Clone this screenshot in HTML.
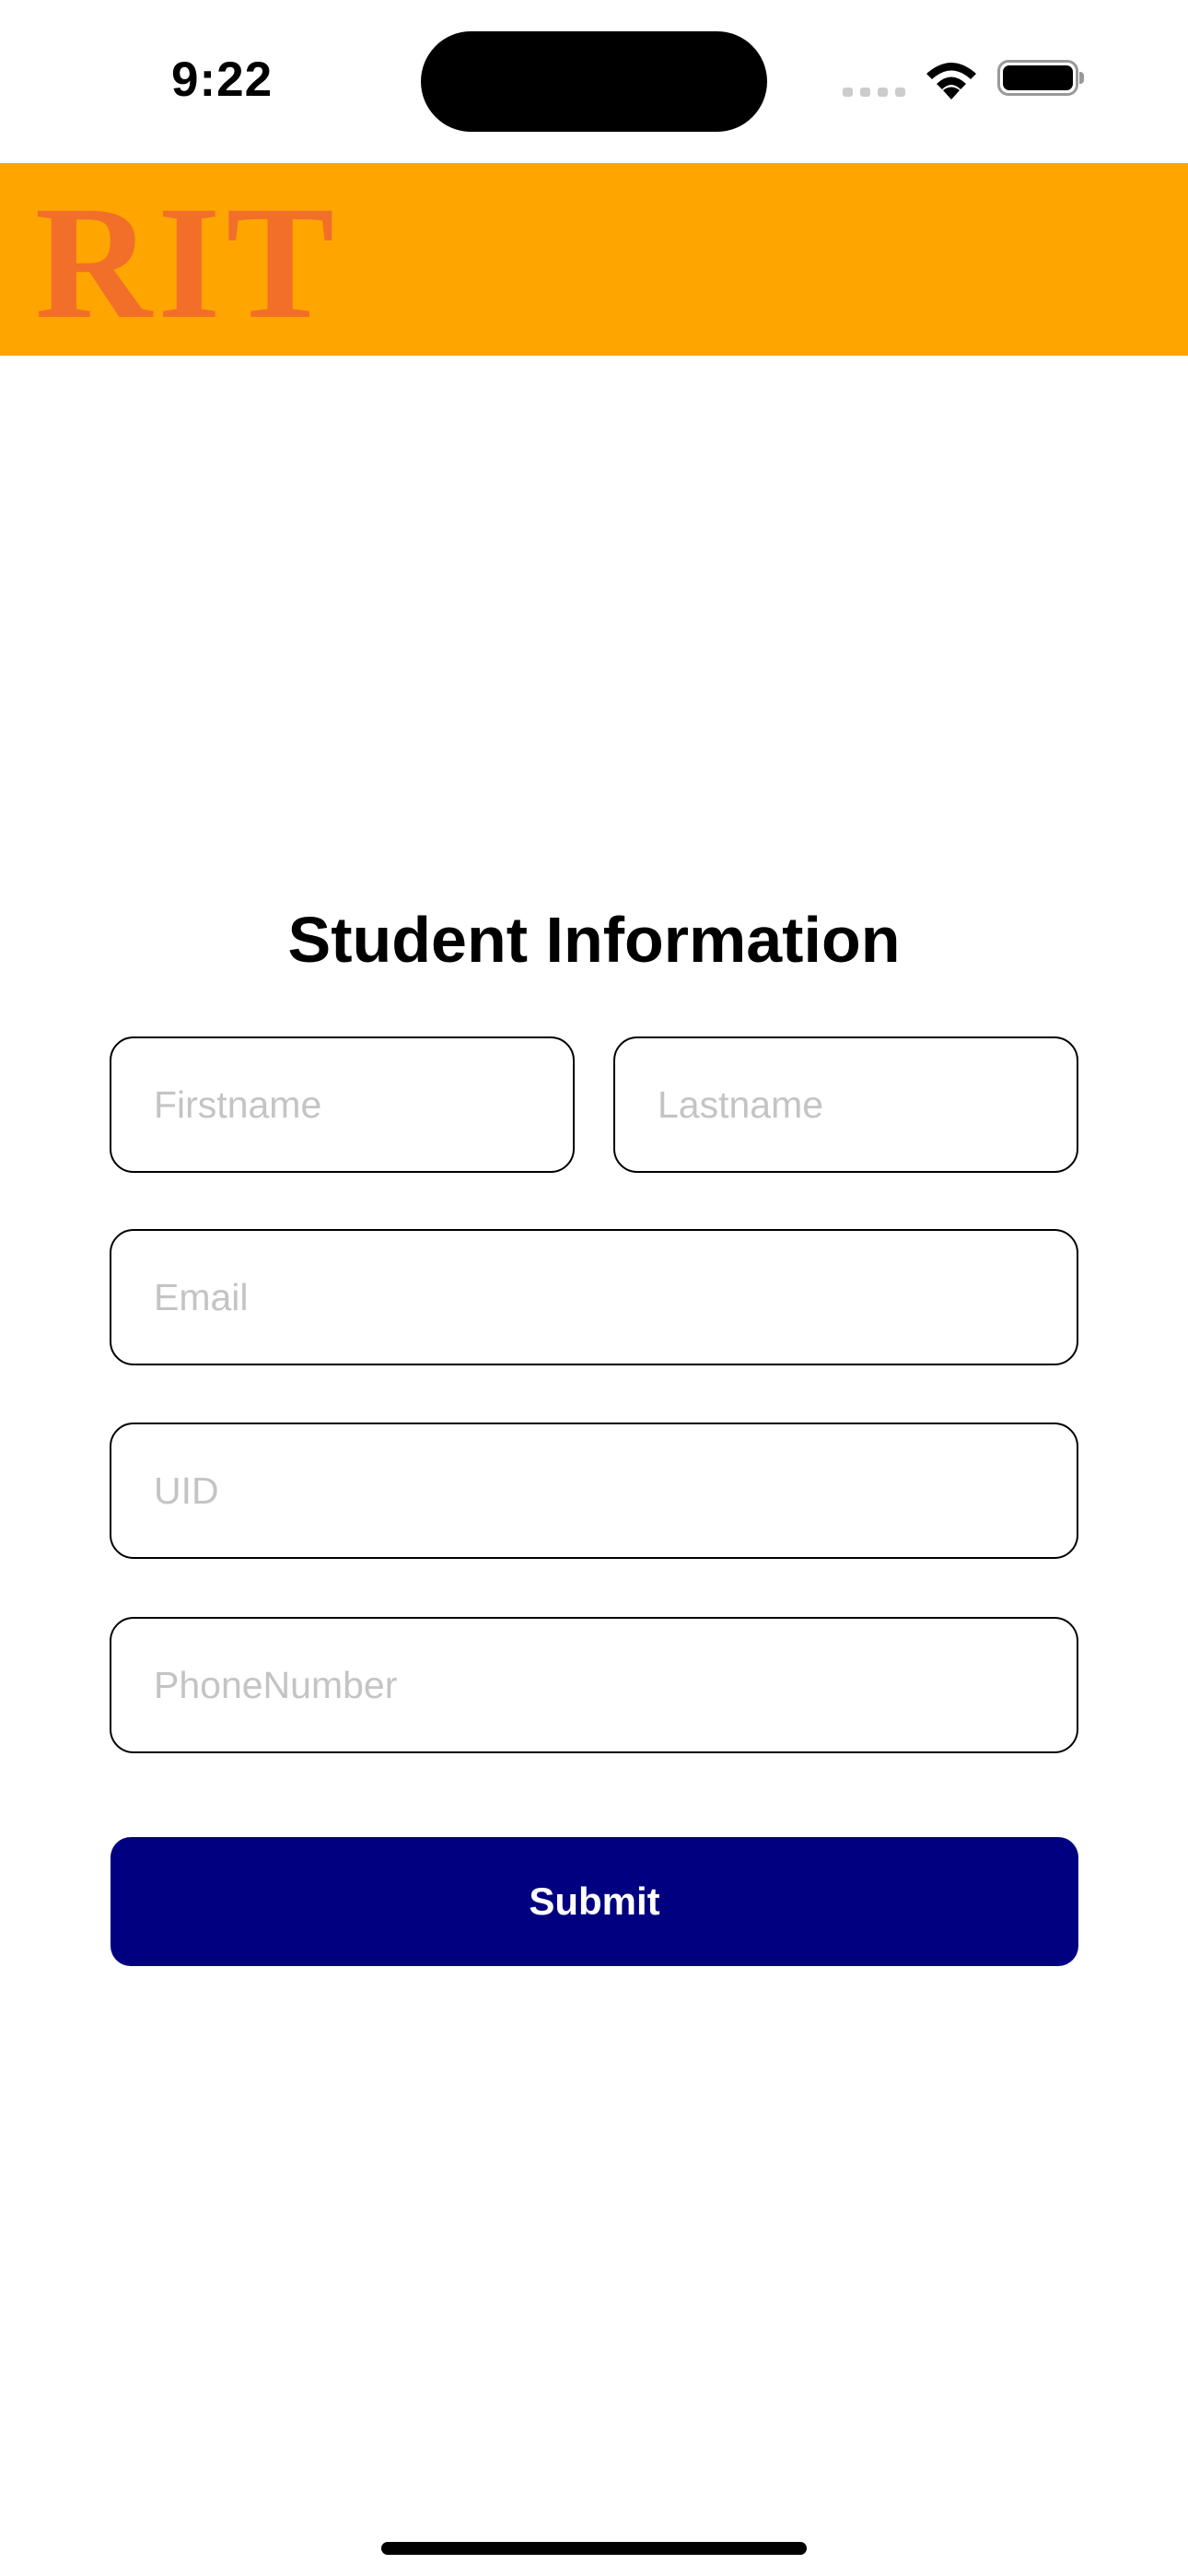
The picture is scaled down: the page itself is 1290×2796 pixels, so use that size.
<!DOCTYPE html>
<html><head><meta charset="utf-8"><style>
*{margin:0;padding:0;box-sizing:border-box}
body{width:1290px;height:2796px;background:#fff;position:relative;overflow:hidden;font-family:"Liberation Sans",sans-serif}
.a{position:absolute}
.f{position:absolute;border:2.5px solid #000;border-radius:26px;background:#fff;color:#c4c4c4;font-size:41px;padding-left:46px;display:flex;align-items:center}
</style></head><body>
<div class="a" style="left:186px;top:56px;font-size:53px;font-weight:bold;letter-spacing:1px">9:22</div>
<div class="a" style="left:457px;top:34px;width:376px;height:109px;border-radius:55px;background:#000"></div>
<div class="a" style="left:915px;top:95px;width:11px;height:10px;border-radius:3px;background:#ccc"></div>
<div class="a" style="left:934px;top:95px;width:11px;height:10px;border-radius:3px;background:#ccc"></div>
<div class="a" style="left:953px;top:95px;width:11px;height:10px;border-radius:3px;background:#ccc"></div>
<div class="a" style="left:972px;top:95px;width:11px;height:10px;border-radius:3px;background:#ccc"></div>
<svg class="a" style="left:1003px;top:64px" width="60" height="44" viewBox="0 0 60 44">
<path d="M30 44 L21 34 Q30 27 39 34 Z" fill="#000"/>
<path d="M14 27 Q30 12 46 27 L40 33 Q30 23 20 33 Z" fill="#000"/>
<path d="M3 16 Q30 -8 57 16 L51 22 Q30 3 9 22 Z" fill="#000"/>
</svg>
<div class="a" style="left:1083px;top:65px;width:88px;height:39px;border:3px solid #999;border-radius:12px"></div>
<div class="a" style="left:1089px;top:71px;width:76px;height:27px;border-radius:7px;background:#000"></div>
<div class="a" style="left:1172px;top:78px;width:5px;height:13px;border-radius:0 4px 4px 0;background:#999"></div>
<div class="a" style="left:0;top:177px;width:1290px;height:209px;background:#FFA500"></div>
<div class="a" style="left:38px;top:198px;font-family:'Liberation Serif',serif;font-weight:bold;font-size:176px;color:#F26F2A;letter-spacing:6px;line-height:1">RIT</div>
<div class="a" style="left:0;top:978px;width:1290px;text-align:center;font-size:70px;font-weight:bold;line-height:84px">Student Information</div>
<div class="f" style="left:119px;top:1125px;width:505px;height:148px">Firstname</div>
<div class="f" style="left:666px;top:1125px;width:505px;height:148px">Lastname</div>
<div class="f" style="left:119px;top:1334px;width:1052px;height:148px">Email</div>
<div class="f" style="left:119px;top:1544px;width:1052px;height:148px">UID</div>
<div class="f" style="left:119px;top:1755px;width:1052px;height:148px">PhoneNumber</div>
<div class="a" style="left:120px;top:1994px;width:1051px;height:140px;border-radius:22px;background:#000080;color:#fff;font-size:42px;font-weight:bold;display:flex;align-items:center;justify-content:center">Submit</div>
<div class="a" style="left:414px;top:2759px;width:462px;height:14px;border-radius:7px;background:#000"></div>
</body></html>
